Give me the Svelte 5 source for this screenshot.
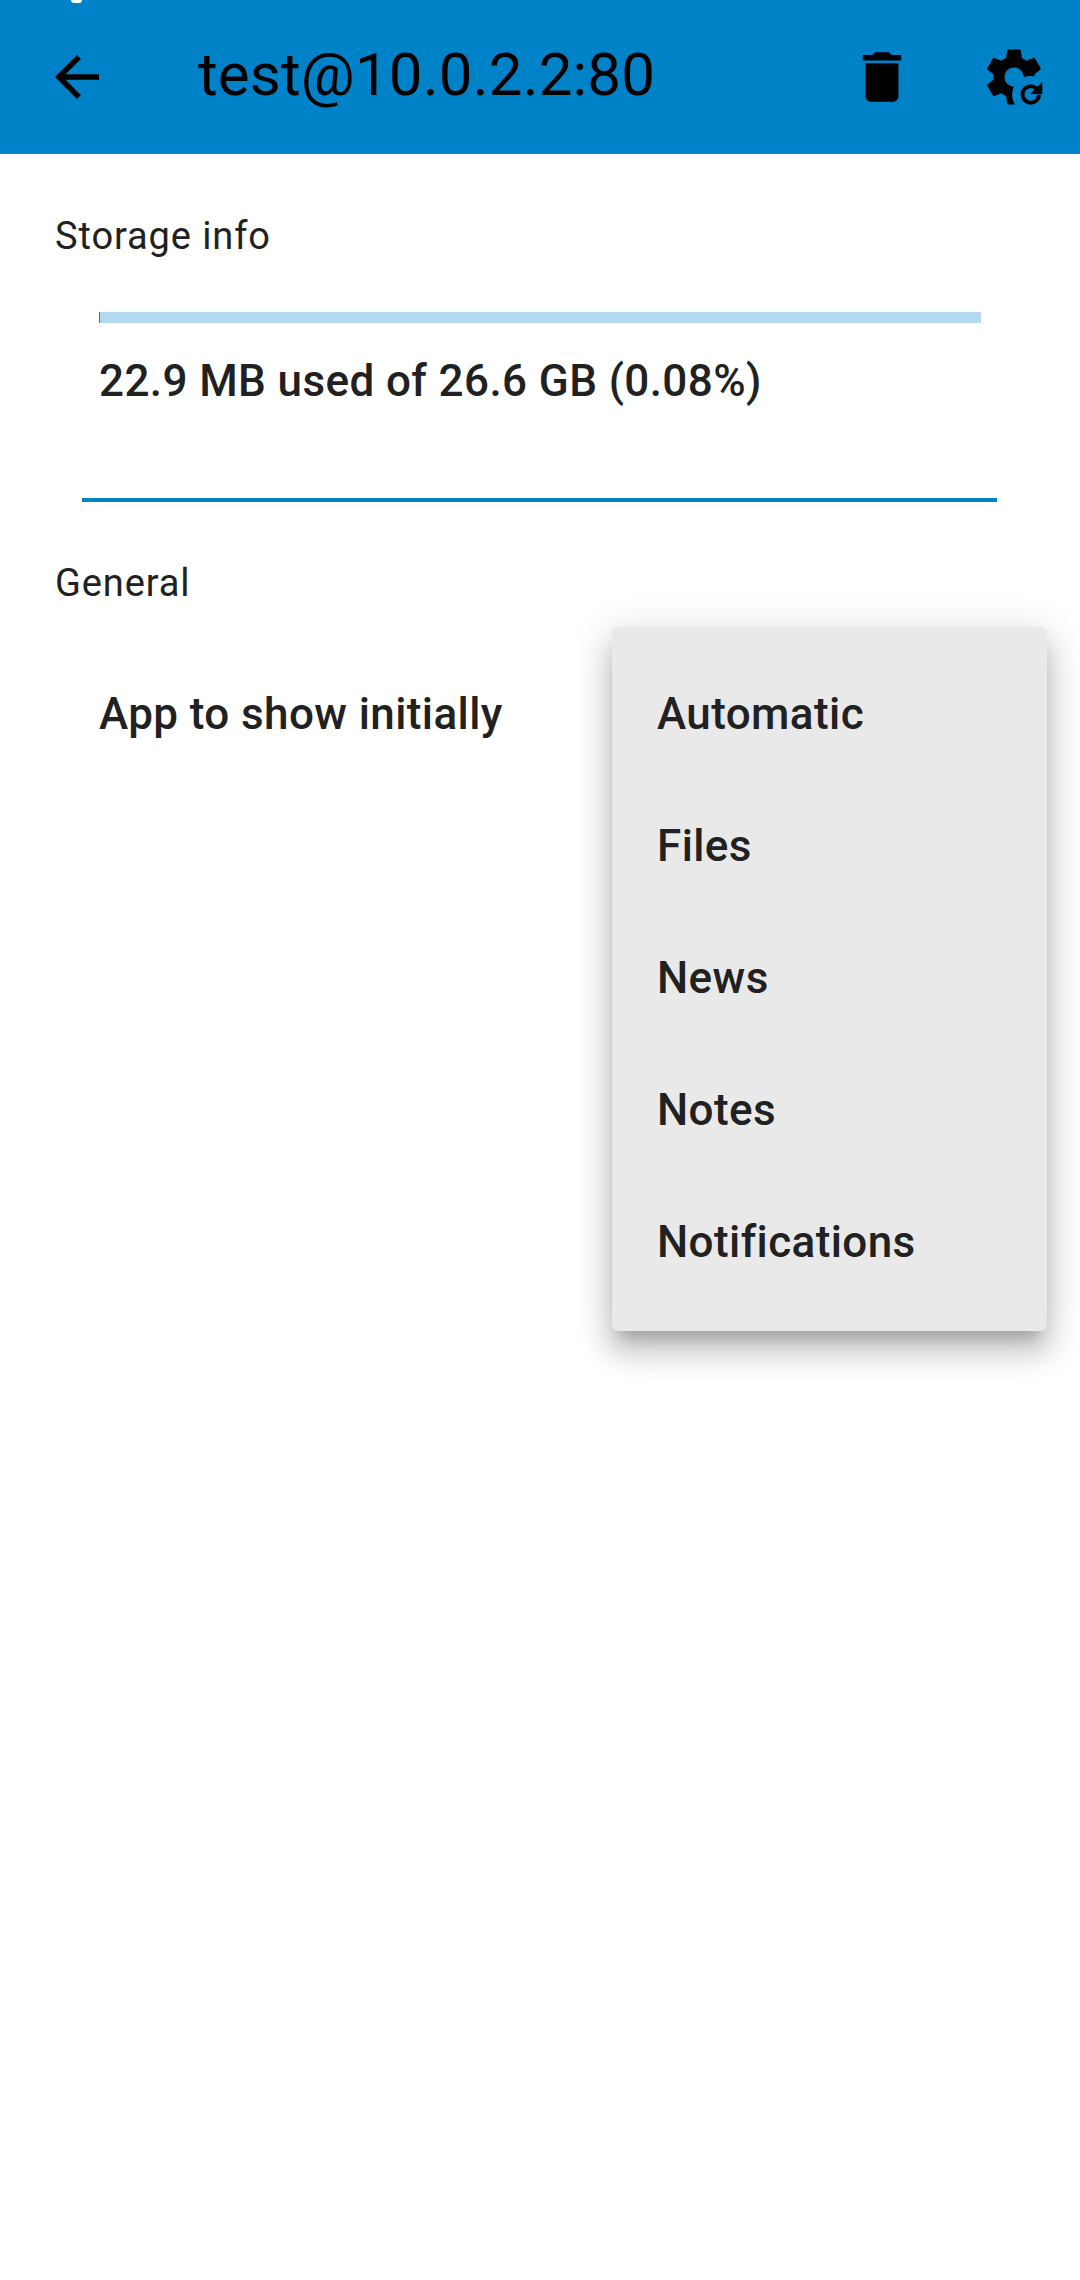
<script>
  const apps = ["Automatic", "Files", "News", "Notes", "Notifications"];
</script>

<div class="screen">
  <header class="toolbar">
    <span class="status-tail"></span>
    <svg class="icon back" viewBox="0 0 24 24"><path d="M20 11H7.83l5.59-5.59L12 4l-8 8 8 8 1.41-1.41L7.83 13H20v-2z" /></svg>
    <h1>test@10.0.2.2:80</h1>
    <svg class="icon trash" viewBox="0 0 24 24"><path d="M6 19c0 1.1.9 2 2 2h8c1.1 0 2-.9 2-2V7H6v12zM19 4h-3.5l-1-1h-5l-1 1H5v2h14V4z" /></svg>
    <svg class="icon cog" viewBox="0 0 24 24">
      <path d="M12,15.5A3.5,3.5 0 0,1 8.5,12A3.5,3.5 0 0,1 12,8.5A3.5,3.5 0 0,1 15.5,12A3.5,3.5 0 0,1 12,15.5M19.43,12.97C19.47,12.65 19.5,12.33 19.5,12C19.5,11.67 19.47,11.34 19.43,11L21.54,9.37C21.73,9.22 21.78,8.95 21.66,8.73L19.66,5.27C19.54,5.05 19.27,4.96 19.05,5.05L16.56,6.05C16.04,5.66 15.5,5.32 14.87,5.07L14.5,2.42C14.46,2.18 14.25,2 14,2H10C9.75,2 9.54,2.18 9.5,2.42L9.13,5.07C8.5,5.32 7.96,5.66 7.44,6.05L4.95,5.05C4.73,4.96 4.46,5.05 4.34,5.27L2.34,8.73C2.21,8.95 2.27,9.22 2.46,9.37L4.57,11C4.53,11.34 4.5,11.67 4.5,12C4.5,12.33 4.53,12.65 4.57,12.97L2.46,14.63C2.27,14.78 2.21,15.05 2.34,15.27L4.34,18.73C4.46,18.95 4.73,19.03 4.95,18.95L7.44,17.94C7.96,18.34 8.5,18.68 9.13,18.93L9.5,21.58C9.54,21.82 9.75,22 10,22H14C14.25,22 14.46,21.82 14.5,21.58L14.87,18.93C15.5,18.67 16.04,18.34 16.56,17.94L19.05,18.95C19.27,19.03 19.54,18.95 19.66,18.73L21.66,15.27C21.78,15.05 21.73,14.78 21.54,14.63L19.43,12.97Z" />
      <circle cx="18.1" cy="18.4" r="6.8" fill="#0082c9" />
      <path d="M21.1 18.4a3 3 0 1 1-1-2.3" fill="none" stroke="#000" stroke-width="1.4" />
      <path d="M22.3 13.8v4.4h-4.4z" />
    </svg>
  </header>

  <section class="storage">
    <h2>Storage info</h2>
    <div class="quota">
      <div class="bar"><div class="fill" style="width: 0.08%"></div></div>
      <p class="row-text">22.9 MB used of 26.6 GB (0.08%)</p>
    </div>
  </section>

  <section class="general">
    <h2>General</h2>
    <div class="row">
      <span class="row-text">App to show initially</span>
      <ul class="menu">
        {#each apps as app}
          <li>{app}</li>
        {/each}
      </ul>
    </div>
  </section>
</div>

<style>
  :global(body) {
    margin: 0;
    background: #fff;
  }

  .screen {
    width: 1080px;
    height: 2280px;
    overflow: hidden;
    font-family: Roboto, sans-serif;
    color: #212121;
  }

  .toolbar {
    position: relative;
    display: flex;
    align-items: center;
    height: 154px;
    background: #0082c9;
    color: #000;
  }

  .status-tail {
    position: absolute;
    top: 0;
    left: 71px;
    width: 11px;
    height: 3px;
    border-radius: 0 0 5px 5px;
    background: #fff;
  }

  .icon {
    flex: none;
    width: 66px;
    height: 66px;
  }

  .back {
    margin-left: 44px;
  }

  h1 {
    flex: 1;
    margin: -6px 0 0 88px;
    font-size: 60px;
    font-weight: 400;
    letter-spacing: 0.2px;
  }

  .trash {
    margin-right: 66px;
  }

  .cog {
    margin-right: 33px;
  }

  h2 {
    margin: 0;
    padding-left: 55px;
    font-size: 38px;
    font-weight: 400;
    line-height: 44px;
    letter-spacing: 0.9px;
  }

  .storage {
    padding-top: 60px;
  }

  .quota {
    box-sizing: content-box;
    height: 186px;
    margin: 54px 83px 0 82px;
    padding: 0 16px 0 17px;
    border-bottom: 4px solid #0082c9;
  }

  .bar {
    height: 11px;
    background: #b2d9ef;
  }

  .fill {
    height: 100%;
    min-width: 1px;
    background: #0082c9;
  }

  .row-text {
    margin: 0;
    font-size: 44px;
    font-weight: 500;
    letter-spacing: 0.4px;
    color: #212121;
  }

  .quota .row-text {
    margin-top: 32px;
  }

  .general {
    padding-top: 59px;
  }

  .row {
    position: relative;
    padding: 83px 0 0 99px;
  }

  .menu {
    position: absolute;
    top: 22px;
    left: 612px;
    width: 435px;
    box-sizing: border-box;
    margin: 0;
    padding: 21px 0 23px;
    list-style: none;
    background: #e9e9e9;
    border-radius: 6px;
    box-shadow: 0 14px 14px -8px rgba(0, 0, 0, 0.2), 0 22px 28px 3px rgba(0, 0, 0, 0.14), 0 8px 38px 6px rgba(0, 0, 0, 0.12);
  }

  .menu li {
    display: flex;
    align-items: center;
    height: 132px;
    padding-left: 45px;
    font-size: 44px;
    font-weight: 500;
    letter-spacing: 0.4px;
    color: #212121;
  }
</style>
